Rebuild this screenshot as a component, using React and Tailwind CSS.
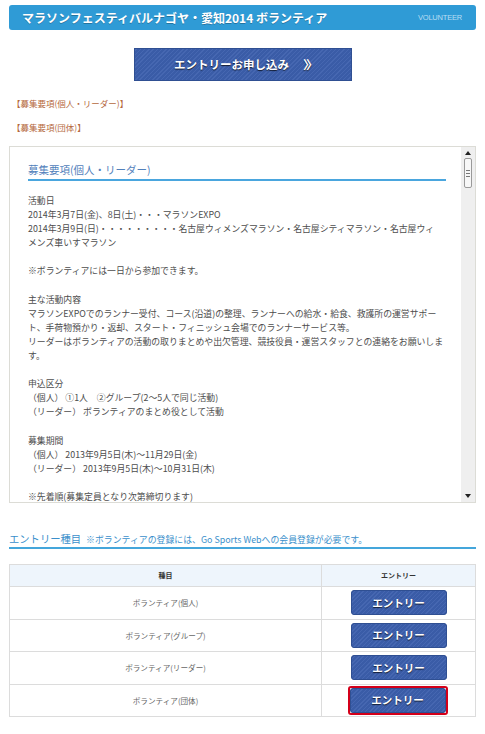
import React from "react";

const font = { fontFamily: '"Noto Sans CJK JP", "Noto Sans", sans-serif' };

const bodyLines = [
  "活動日",
  "2014年3月7日(金)、8日(土)・・・マラソンEXPO",
  "2014年3月9日(日)・・・・・・・・・名古屋ウィメンズマラソン・名古屋シティマラソン・名古屋ウィ",
  "メンズ車いすマラソン",
  "",
  "※ボランティアには一日から参加できます。",
  "",
  "主な活動内容",
  "マラソンEXPOでのランナー受付、コース(沿道)の整理、ランナーへの給水・給食、救護所の運営サポー",
  "ト、手荷物預かり・返却、スタート・フィニッシュ会場でのランナーサービス等。",
  "リーダーはボランティアの活動の取りまとめや出欠管理、競技役員・運営スタッフとの連絡をお願いしま",
  "す。",
  "",
  "申込区分",
  "（個人） ①1人　②グループ(2～5人で同じ活動)",
  "（リーダー） ボランティアのまとめ役として活動",
  "",
  "募集期間",
  "（個人） 2013年9月5日(木)～11月29日(金)",
  "（リーダー） 2013年9月5日(木)～10月31日(木)",
  "",
  "※先着順(募集定員となり次第締切ります)",
];

const rows = [
  "ボランティア(個人)",
  "ボランティア(グループ)",
  "ボランティア(リーダー)",
  "ボランティア(団体)",
];

function EntryButton() {
  return (
    <div className="w-[96px] h-[25px] rounded-[3px] border border-[#2f4f92] bg-[#3b5ea9] bg-[image:repeating-linear-gradient(-45deg,#3a5ca7_0px,#3a5ca7_2px,#4667b1_2px,#4667b1_3px)] flex items-center justify-center text-white font-bold text-[10.5px] [text-shadow:0_1px_1px_rgba(0,0,0,0.7)]">
      エントリー
    </div>
  );
}

export default function App() {
  return (
    <div className="w-[485px] h-[734px] bg-white overflow-hidden" style={font}>
      {/* header bar */}
      <div className="mt-[5px] mx-[9px] h-[25px] rounded-[3px] bg-[#2f9bd6] flex items-center justify-between pl-[13px] pr-[14px]">
        <span className="text-white font-bold text-[12px] leading-none [text-shadow:0_1px_0_rgba(0,0,0,0.25)]">
          マラソンフェスティバルナゴヤ・愛知2014 ボランティア
        </span>
        <span className="text-[#b9def3] text-[7.5px] tracking-[-0.2px] leading-none" style={{ fontFamily: '"Liberation Sans", sans-serif' }}>
          VOLUNTEER
        </span>
      </div>

      {/* main button */}
      <div className="flex justify-center mt-[18px]">
        <div className="w-[218px] h-[33px] border border-[#2f4f92] bg-[#3b5ea9] bg-[image:repeating-linear-gradient(-45deg,#3a5ca7_0px,#3a5ca7_2px,#4667b1_2px,#4667b1_3px)] flex items-center justify-center text-white font-bold text-[11.5px] [text-shadow:0_1px_1px_rgba(0,0,0,0.7)] gap-[14px] pl-[4px]">
          <span>エントリーお申し込み</span>
          <span className="text-[12px] tracking-[-3px]">〉〉</span>
        </div>
      </div>

      {/* links */}
      <div className="mt-[15px] ml-[12px] text-[8.5px] leading-[14px] text-[#b5683d]">
        【募集要項(個人・リーダー)】
      </div>
      <div className="mt-[10px] ml-[12px] text-[8.5px] leading-[14px] text-[#b5683d]">
        【募集要項(団体)】
      </div>

      {/* scroll box */}
      <div className="mt-[12px] mx-[9px] h-[357px] border border-[#dcdcd6] flex">
        <div className="flex-1 overflow-hidden pl-[18px] pr-[15px] pt-[15px]">
          <div className="text-[10.5px] leading-[16px] text-[#5281bb] border-b-2 border-[#4aa6de] pb-[1px]">
            募集要項(個人・リーダー)
          </div>
          <div className="mt-[13px] text-[8.85px] leading-[14.1px] text-[#4d4d4d]">
            {bodyLines.map((l, i) => (
              <div key={i} className="whitespace-nowrap h-[14.1px]">
                {l || "\u00a0"}
              </div>
            ))}
          </div>
        </div>
        {/* scrollbar */}
        <div className="w-[14px] bg-[#efefef] flex flex-col items-center justify-between pt-[2px] pb-[2px]">
          <div className="flex flex-col items-center">
            <div className="w-0 h-0 border-l-[3px] border-r-[3px] border-b-[4px] border-l-transparent border-r-transparent border-b-[#222] mt-[2px]" />
            <div className="mt-[3px] w-[8px] h-[30px] rounded-[2px] border border-[#9a9a9a] bg-[#f7f7f7] flex flex-col items-center justify-center gap-[2px]">
              <div className="w-[4px] h-[1px] bg-[#777]" />
              <div className="w-[4px] h-[1px] bg-[#777]" />
              <div className="w-[4px] h-[1px] bg-[#777]" />
            </div>
          </div>
          <div className="w-0 h-0 border-l-[3px] border-r-[3px] border-t-[4px] border-l-transparent border-r-transparent border-t-[#222] mb-[2px]" />
        </div>
      </div>

      {/* entry section */}
      <div className="mt-[29px] mx-[9px] border-b-2 border-[#44a6db] flex items-baseline leading-[14px] pb-[0px]">
        <span className="text-[10.3px] text-[#3a8fcb]">エントリー種目</span>
        <span className="ml-[5px] text-[8.9px] text-[#3a8fcb]">
          ※ボランティアの登録には、Go Sports Webへの会員登録が必要です。
        </span>
      </div>

      <div className="mt-[15px] mx-[9px]">
        <table className="w-[467px] border-collapse">
          <thead>
            <tr className="h-[22px] bg-[#eef5fc]">
              <th className="w-[312px] border border-[#dcdcdc] text-[7px] font-bold text-[#333] p-0">種目</th>
              <th className="border border-[#dcdcdc] text-[7px] font-bold text-[#333] p-0">エントリー</th>
            </tr>
          </thead>
          <tbody>
            {rows.map((r, i) => (
              <tr key={i} className="h-[32.5px]">
                <td className="border border-[#dcdcdc] text-center text-[7.6px] text-[#666] p-0">{r}</td>
                <td className="border border-[#dcdcdc] p-0">
                  <div className="flex justify-center">
                    {i === 3 ? (
                      <div className="border-2 border-[#d4001a] rounded-[3px] ml-[-2px]">
                        <EntryButton />
                      </div>
                    ) : (
                      <EntryButton />
                    )}
                  </div>
                </td>
              </tr>
            ))}
          </tbody>
        </table>
      </div>
    </div>
  );
}
